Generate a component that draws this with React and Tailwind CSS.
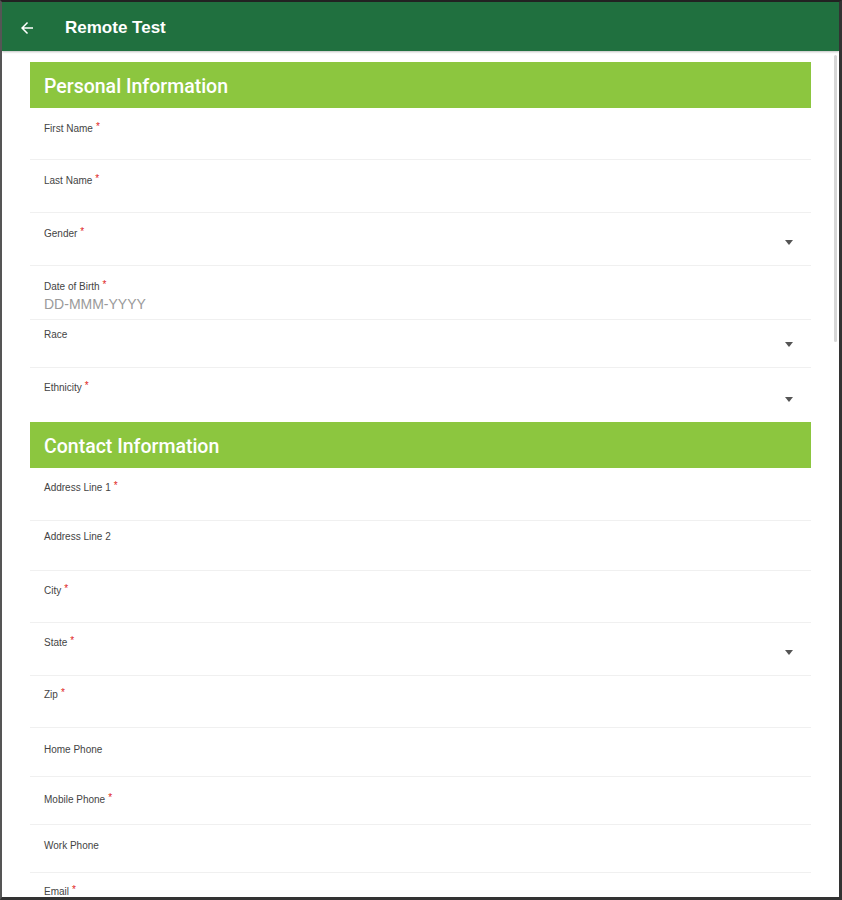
import React from 'react';

const personal = [
  { label: 'First Name', req: true, h: 'h-[52px]', pt: 'pt-[15px]' },
  { label: 'Last Name', req: true, h: 'h-[53px]', pt: 'pt-[15px]' },
  { label: 'Gender', req: true, h: 'h-[53px]', pt: 'pt-[15px]', select: true },
  { label: 'Date of Birth', req: true, h: 'h-[54px]', pt: 'pt-[15px]', placeholder: 'DD-MMM-YYYY' },
  { label: 'Race', h: 'h-[48px]', pt: 'pt-[9px]', select: true },
  { label: 'Ethnicity', req: true, h: 'h-[54px]', pt: 'pt-[14px]', select: true, last: true },
];

const contact = [
  { label: 'Address Line 1', req: true, h: 'h-[53px]', pt: 'pt-[14px]' },
  { label: 'Address Line 2', h: 'h-[50px]', pt: 'pt-[10px]' },
  { label: 'City', req: true, h: 'h-[52px]', pt: 'pt-[14px]' },
  { label: 'State', req: true, h: 'h-[53px]', pt: 'pt-[14px]', select: true },
  { label: 'Zip', req: true, h: 'h-[52px]', pt: 'pt-[13px]' },
  { label: 'Home Phone', h: 'h-[49px]', pt: 'pt-[16px]' },
  { label: 'Mobile Phone', h: 'h-[48px]', pt: 'pt-[17px]', req: true },
  { label: 'Work Phone', h: 'h-[48px]', pt: 'pt-[15px]' },
  { label: 'Email', req: true, h: 'h-[52px]', pt: 'pt-[13px]' },
];

function Caret() {
  return (
    <svg width="8" height="5" viewBox="0 0 8 5" className="absolute right-[18px] bottom-[20px]">
      <path d="M0 0h8L4 5z" fill="#555" />
    </svg>
  );
}

function Field({ f }) {
  return (
    <div className={`relative shrink-0 ${f.h} ${f.last ? '' : 'border-b border-[#f0f0f0]'}`}>
      <div className={`px-[14px] ${f.pt}`}>
        <div className="text-[10px] leading-[12px] text-[#444]">
          {f.label}
          {f.req && <span className="text-[#e0241b] ml-[3px] relative -top-[2px]">*</span>}
        </div>
        {f.placeholder && (
          <div className="text-[14px] leading-[18px] text-[#9a9a9a] mt-[2px]">{f.placeholder}</div>
        )}
      </div>
      {f.select && <Caret />}
    </div>
  );
}

function SectionHeader({ title }) {
  return (
    <div className="h-[46px] shrink-0 bg-[#8cc63f] flex items-center px-[14px] pt-[3px]">
      <h2
        className="text-white text-[19.5px] font-medium"
        style={{ fontFamily: 'Roboto, "Liberation Sans", sans-serif' }}
      >
        {title}
      </h2>
    </div>
  );
}

export default function App() {
  return (
    <div
      className="w-[842px] h-[900px] overflow-hidden bg-white border-t-2 border-l-2 border-r-[3px] border-b-[3px] border-t-[#222] border-l-[#555] border-r-[#333] border-b-[#333] flex flex-col"
      style={{ fontFamily: '"Liberation Sans", Arial, sans-serif' }}
    >
      {/* top bar */}
      <div className="h-[49px] shrink-0 bg-[#20703f] flex items-center pt-[3px] shadow-[0_1px_2px_rgba(0,0,0,0.25)] relative z-10">
        <svg width="18" height="18" viewBox="0 0 24 24" className="ml-[16px]">
          <path d="M20 11H7.83l5.59-5.59L12 4l-8 8 8 8 1.41-1.41L7.83 13H20v-2z" fill="#fff" />
        </svg>
        <h1 className="ml-[29px] text-white text-[17px] font-bold">Remote Test</h1>
      </div>

      <div className="relative flex-1 overflow-hidden">
        <div className="pl-[28px] pr-[28px] pt-[11px] flex flex-col">
          <SectionHeader title="Personal Information" />
          {personal.map((f) => (
            <Field key={f.label} f={f} />
          ))}
          <SectionHeader title="Contact Information" />
          {contact.map((f) => (
            <Field key={f.label} f={f} />
          ))}
        </div>
        {/* scroll indicator */}
        <div className="absolute right-[2px] top-[4px] w-[3px] h-[287px] rounded-full bg-[#d6d6d6]" />
      </div>
    </div>
  );
}
